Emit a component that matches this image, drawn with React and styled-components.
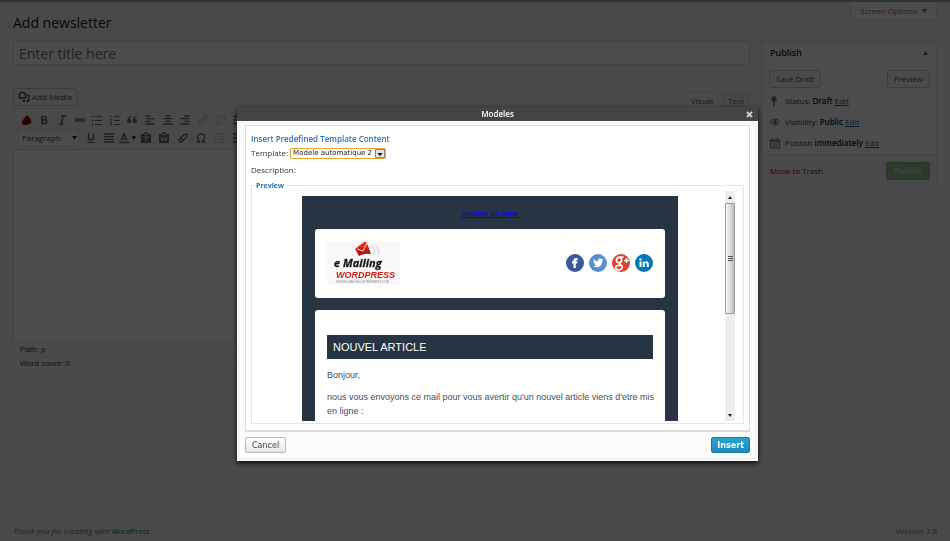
import React from "react";
import styled, { createGlobalStyle, css } from "styled-components";

const Global = createGlobalStyle`
  *, *::before, *::after { box-sizing: border-box; }
  body { margin: 0; background: #f4f4f4; font: 8px/12px "Open Sans", sans-serif; color: #444; }
  button, input, select, textarea { font: inherit; color: inherit; margin: 0; }
  h1, h2, h3, p { margin: 0; font-weight: normal; }
  b { font-weight: 600; color: #222; }
`;

/* ---------- admin page ---------- */

const Page = styled.div`
  display: flex;
  flex-direction: column;
  min-height: 100vh;
  padding: 0 13px;
  border-top: 2px solid #89b7c5;
`;
const Header = styled.header`
  display: flex;
  justify-content: space-between;
  align-items: flex-start;
  height: 39px;
`;
const PageTitle = styled.h1`
  padding-top: 10px;
  font-size: 14px;
  line-height: 22px;
  color: #222;
`;
const ScreenOptions = styled.button`
  display: flex;
  align-items: center;
  gap: 5px;
  height: 18px;
  padding: 0 9px;
  border: 1px solid #e0e0e0;
  border-top: 0;
  background: #fff;
  color: #777;
  font-size: 8px;
`;
const Columns = styled.div`
  display: grid;
  grid-template-columns: minmax(0, 1fr) 175px;
  gap: 12px;
  align-items: start;
`;
const TitleInput = styled.input`
  display: block;
  width: 100%;
  height: 24px;
  padding: 0 5px;
  border: 1px solid #ddd;
  background: #fff;
  font-size: 14px;
  &::placeholder { color: #777; opacity: 1; }
`;
const EditorTabs = styled.div`
  display: flex;
  align-items: flex-end;
  justify-content: space-between;
  height: 43px;
`;
const WpButton = styled.button`
  display: flex;
  align-items: center;
  gap: 3px;
  height: 18px;
  padding: 0 6px;
  border: 1px solid #ccc;
  border-radius: 2px;
  background: #f7f7f7;
  color: #555;
  white-space: nowrap;
  ${(p) => p.$primary && css`
    padding: 0 7px;
    border-color: #83b389;
    background: #8ec595;
    color: #d4e8d6;
    font-weight: 600;
  `}
`;
const MediaButton = styled(WpButton)`
  margin-bottom: 2px;
  padding: 0 4px;
  gap: 2px;
`;
const TabList = styled.div`
  display: flex;
  gap: 3px;
`;
const Tab = styled.button`
  height: 16px;
  padding: 0 5px;
  border: 1px solid #e2e2e2;
  border-bottom: 0;
  background: ${(p) => (p.$active ? "#f7f7f7" : "#ebebeb")};
  color: ${(p) => (p.$active ? "#555" : "#777")};
`;
const Editor = styled.section`
  border: 1px solid #e3e3e3;
  background: #fff;
`;
const Toolbar = styled.div`
  display: flex;
  flex-direction: column;
  gap: 1px;
  padding: 2px 4px;
  height: 41px;
  border-bottom: 1px solid #ddd;
  background: #f5f5f5;
`;
const ToolRow = styled.div`
  display: grid;
  grid-template-columns: ${(p) => (p.$format ? "64px 165px" : "229px")};
`;
const ToolGroup = styled.div`
  display: grid;
  grid-auto-flow: column;
  grid-auto-columns: 1fr;
  height: 17px;
`;
const ToolButton = styled.button`
  display: flex;
  align-items: center;
  justify-content: center;
  padding: 0;
  border: 0;
  background: none;
  color: #6c6c6c;
  opacity: ${(p) => (p.$faded ? 0.3 : 1)};
`;
const SelectBox = styled.div`
  display: grid;
  align-items: center;
  color: #222;
  & > * { grid-area: 1 / 1; }
  & > svg { justify-self: end; margin-right: 5px; pointer-events: none; }
`;
const FormatSelect = styled.select`
  width: 61px;
  height: 17px;
  padding: 0 3px;
  border: 1px solid #e5e5e5;
  background: #fff;
  color: #444;
  appearance: none;
`;
const Writing = styled.textarea`
  display: block;
  width: 100%;
  height: 192px;
  padding: 8px;
  border: 0;
  resize: none;
  background: #fff;
`;
const StatusLine = styled.div`
  height: 14px;
  padding: 0 6px;
  border-top: 1px solid #e3e3e3;
  background: #f9f9f9;
  font: 8px/13px "Liberation Sans", sans-serif;
`;
const Panel = styled.section`
  border: 1px solid #e5e5e5;
  background: #fff;
`;
const PanelHead = styled.div`
  display: flex;
  align-items: center;
  justify-content: space-between;
  height: 22px;
  padding: 0 8px 0 7px;
  border-bottom: 1px solid #eee;
  color: #777;
`;
const PanelTitle = styled.h2`
  font-size: 9px;
  font-weight: 600;
  color: #222;
`;
const PanelActions = styled.div`
  display: flex;
  justify-content: space-between;
  padding: 6px;
`;
const InfoList = styled.div`
  display: grid;
  gap: 9px;
  padding: 1px 6px 5px;
`;
const InfoRow = styled.div`
  display: flex;
  align-items: center;
  gap: 4px;
`;
const PanelFoot = styled.div`
  display: flex;
  align-items: center;
  justify-content: space-between;
  height: 33px;
  padding: 0 6px 0 7px;
  border-top: 1px solid #ddd;
  background: #f5f5f5;
`;
const Link = styled.a`
  color: ${(p) => (p.$danger ? "#a00" : "#0074a2")};
  text-decoration: ${(p) => (p.$plain ? "none" : "underline")};
`;
const Footer = styled.footer`
  display: flex;
  justify-content: space-between;
  margin-top: auto;
  padding-bottom: 4px;
  color: #777;
`;

/* ---------- dialog ---------- */

const Overlay = styled.div`
  position: fixed;
  inset: 0;
  display: flex;
  align-items: flex-start;
  justify-content: center;
  padding: 107px 0 0 45px;
  background: rgba(0, 0, 0, 0.7);
`;
const Dialog = styled.div`
  width: 521px;
  max-width: 100%;
  background: #444;
  box-shadow: 0 2px 5px rgba(0, 0, 0, 0.9);
`;
const DialogTitle = styled.div`
  display: grid;
  grid-template-columns: 16px 1fr 16px;
  align-items: center;
  height: 14px;
  color: #fff;
  text-align: center;
`;
const TitleText = styled.h2`
  font-size: 8px;
  font-weight: 600;
`;
const CloseButton = styled.button`
  display: flex;
  padding: 0 4px;
  border: 0;
  background: none;
  color: #ccc;
`;
const DialogBody = styled.div`
  padding: 2px 5px 5px;
  border: solid #f3f3f3;
  border-width: 2px 3px 3px;
  outline: 1px solid #fff;
  outline-offset: -1px;
  background: #fcfcfc;
`;
const Frame = styled.div`
  padding: 7px 5px 6px;
  border: 1px solid #ddd;
  border-bottom-width: 2px;
  background: #fff;
  color: #333;
`;
const Heading = styled.h3`
  font-size: 8px;
  line-height: 11px;
  font-weight: 600;
  color: #2b6fb6;
`;
const Field = styled.div`
  display: flex;
  align-items: center;
  gap: 2px;
  height: ${(p) => (p.$tall ? "17px" : "14px")};
  margin-top: ${(p) => (p.$tall ? "1px" : "2px")};
`;
const TemplateSelectBox = styled(SelectBox)`
  & > svg { margin-right: 1px; }
`;
const TemplateSelect = styled.select`
  width: 96px;
  height: 11px;
  padding: 0 2px;
  border: 1px solid #e8a628;
  border-radius: 1px;
  background: #fff;
  font: 7px/9px "DejaVu Sans", sans-serif;
  appearance: none;
`;
const PreviewSet = styled.fieldset`
  min-width: 0;
  margin: 4px 0 0;
  padding: 2px 8px 2px 50px;
  border: 1px solid #e6e6e6;
`;
const Legend = styled.legend`
  height: 7px;
  margin-left: -47px;
  padding: 0 1px;
  font-size: 7px;
  line-height: 7px;
  font-weight: 700;
  color: #2b6fb6;
`;
const Viewport = styled.div`
  display: flex;
  justify-content: space-between;
  height: 230px;
`;
const Mail = styled.div`
  display: flex;
  flex-direction: column;
  gap: 12px;
  width: 376px;
  margin-top: 5px;
  padding: 0 13px;
  overflow: hidden;
  background: #273444;
  font: 9px/14px "Liberation Sans", sans-serif;
  color: #44505c;
`;
const OnlineLink = styled.a`
  align-self: center;
  margin: 11px 0 -4px;
  line-height: 14px;
  font-size: 8px;
  color: #00f;
`;
const Card = styled.div`
  flex: none;
  padding: ${(p) => (p.$banner ? "12px 12px 13px" : "25px 12px")};
  border-radius: 3px;
  background: #fff;
`;
const Masthead = styled(Card)`
  display: flex;
  align-items: center;
  justify-content: space-between;
`;
const Socials = styled.div`
  display: flex;
  gap: 5px;
`;
const SocialLink = styled.a`
  display: flex;
`;
const ArticleTitle = styled.h2`
  padding: 0 6px;
  background: #273444;
  color: #fff;
  font-size: 11px;
  line-height: 24px;
`;
const Para = styled.p`
  margin: ${(p) => (p.$first ? "9px" : "8px")} -8px 0 0;
`;
const ScrollTrack = styled.div`
  display: grid;
  grid-template-rows: 12px 111px 1fr 12px;
  justify-items: center;
  align-items: center;
  width: 10px;
  background: #ededed;
`;
const ScrollThumb = styled.div`
  display: flex;
  align-items: center;
  justify-content: center;
  width: 10px;
  height: 111px;
  border: 1px solid #9a9aa0;
  border-radius: 1px;
  background: linear-gradient(90deg, #fafafa, #dcdce0 50%, #bcbcc4);
`;
const DialogActions = styled.div`
  display: flex;
  justify-content: space-between;
  padding-top: 5px;
`;
const ActionButton = styled.button`
  height: 16px;
  padding: ${(p) => (p.$primary ? "1px 5px 0" : "1px 6px 0")};
  border: 1px solid ${(p) => (p.$primary ? "#1379a8" : "#b9b9b9")};
  border-radius: 2px;
  background: ${(p) => (p.$primary ? "linear-gradient(#2ea2cc, #1e8cbe)" : "linear-gradient(#fff, #e6e6e6)")};
  color: ${(p) => (p.$primary ? "#fff" : "#444")};
  font: ${(p) => (p.$primary ? "bold" : "normal")} 8px/12px "DejaVu Sans", sans-serif;
`;

/* ---------- drawings ---------- */

const Svg = ({ w = 12, h = 12, children, ...rest }) => (
  <svg width={w} height={h} viewBox={`0 0 ${w} ${h}`} fill="none" stroke="currentColor" aria-hidden="true" {...rest}>
    {children}
  </svg>
);
const Triangle = ({ up }) => (
  <Svg w={5} h={4} stroke="none">
    <path fill="currentColor" d={up ? "M0 4h5L2.500 0z" : "M0 0h5L2.500 4z"} />
  </Svg>
);

const icons = {
  Newsletter: <Svg stroke="none"><path fill="#c00" d="M1 7 6 1l3 3 1 5-5 2-4-1z" /><path fill="#700" d="M1 7l4 1 4-4 1 5-5 2-4-1z" /><path stroke="#bbb" d="M11 5q1 3-1 5" /></Svg>,
  Bold: <Svg><path strokeWidth="1.700" d="M4 2.500v7M3 2.500h3.500q1.700 0 1.700 1.700t-1.700 1.700H4M6.500 6q2.200 0 2.200 1.800t-2.200 1.800H3" /></Svg>,
  Italic: <Svg><path strokeWidth="1.500" d="M5 2h5M2.500 10h5M7.500 2l-2.500 8" /></Svg>,
  Strikethrough: <Svg stroke="none"><text x="1" y="8" fontSize="5" fontWeight="700" fill="currentColor">ABC</text><path fill="currentColor" d="M0 5.500h12v1H0z" /></Svg>,
  "Bulleted list": <Svg><path d="M4 2.500h7M4 6.500h7M4 10.500h7" /><path strokeWidth="1.500" d="M1 2.500h1.500M1 6.500h1.500M1 10.500h1.500" /></Svg>,
  "Numbered list": <Svg><path d="M5 2.500h6M5 6.500h6M5 10.500h6" /><path strokeWidth=".8" d="M1 1.500h1V4M1 5.500h1.500L1 7.500h1.500M1 9h1.500v2H1M1.500 10h1" /></Svg>,
  Quote: <Svg stroke="none"><path fill="currentColor" d="M6 2Q3.500 2.800 3.500 5h.3a2.100 2.100 0 1 1-2.600 2Q1 2.500 6 1.500zM11.500 2Q9 2.800 9 5h.3a2.100 2.100 0 1 1-2.600 2Q6.500 2.500 11.500 1.500z" /></Svg>,
  "Align left": <Svg><path strokeWidth="1.300" d="M1.500 2h5M1.500 4.700h9M1.500 7.300h5M1.500 10h9" /></Svg>,
  "Align center": <Svg><path strokeWidth="1.300" d="M3.500 2h5M1.500 4.700h9M3.500 7.300h5M1.500 10h9" /></Svg>,
  "Align right": <Svg><path strokeWidth="1.300" d="M5.500 2h5M1.500 4.700h9M5.500 7.300h5M1.500 10h9" /></Svg>,
  Link: <Svg><path strokeWidth="1.300" d="M5 7l3-3M5.500 4l2-2q1.500-1 2.500 0t0 2.500l-2 2M6.500 8l-2 2q-1.500 1-2.500 0t0-2.500l2-2" /></Svg>,
  Unlink: <Svg><path strokeWidth="1.300" d="M6 4l1.500-2q1.500-1 2.500 0t0 2.500L8.500 6M6 8l-1.500 2q-1.500 1-2.500 0t0-2.500L3.500 6M2 2l2 2M8 8l2 2" /></Svg>,
  "Insert more": <Svg><path strokeWidth="1.500" d="M1 2.500h10M1 6h3M5.500 6h2M9 6h2M1 9.500h10" /></Svg>,
  Underline: <Svg><path strokeWidth="1.500" d="M3.500 1.500v4q0 2.500 2.500 2.500t2.500-2.500v-4" /><path d="M2 10.500h8" /></Svg>,
  Justify: <Svg><path strokeWidth="1.300" d="M1 2h10M1 4.700h10M1 7.300h10M1 10h10" /></Svg>,
  "Text color": <Svg w={17}><path strokeWidth="1.500" d="M2 8.500 4.700 2h.6l2.700 6.500M3 6.500h4.500" /><path strokeWidth="1.500" d="M0 10.500h10" /><path fill="#000" stroke="none" d="M12.500 4.500h4.500l-2.200 3z" /></Svg>,
  "Paste as text": <Svg><path fill="currentColor" stroke="none" d="M1 2h3V.5h4V2h3v9H1z" /><path stroke="#f5f5f5" d="M3 5h6M6 5v5M4 2.500h4" /></Svg>,
  "Paste from Word": <Svg><path fill="currentColor" stroke="none" d="M1 2h3V.5h4V2h3v9H1z" /><path stroke="#f5f5f5" d="M3 5l1.300 4L6 5.500 7.700 9 9 5M4 2.500h4" /></Svg>,
  "Clear formatting": <Svg><path strokeWidth="1.300" d="M2 8l5-5.500h3L9.500 5l-5 5h-2zM4 6.500 6 8" /></Svg>,
  "Special character": <Svg><path strokeWidth="1.300" d="M1.500 10H4.500V9Q2.500 7.500 2.500 5.500 2.500 2 6 2t3.500 3.500Q9.500 7.500 7.500 9v1h3" /></Svg>,
  Outdent: <Svg><path d="M1 2h10M6 4.700h5M6 7.300h5M1 10h10M5 6H1M3 4.500 1 6l2 1.500" /></Svg>,
  Indent: <Svg><path strokeWidth="1.300" d="M1 2h10M6 4.700h5M6 7.300h5M1 10h10M1 6h4" /></Svg>,
};

const Tools = ({ names, faded = [] }) => (
  <ToolGroup>
    {names.map((n) => (
      <ToolButton key={n} aria-label={n} title={n} $faded={faded.includes(n)}>{icons[n]}</ToolButton>
    ))}
  </ToolGroup>
);

const MediaIcon = () => (
  <Svg><path strokeWidth="1.500" d="M1.500 2.500h1l1-1h2l1 1h1V7h-6z" /><path strokeWidth="1.300" d="M9 4.500h2V10" /><circle cx="9.700" cy="10" r="1.300" fill="currentColor" stroke="none" /><circle cx="6" cy="9.700" r="1.300" fill="currentColor" stroke="none" /></Svg>
);
const PinIcon = () => (
  <Svg><circle cx="5" cy="4" r="2.700" fill="#777" stroke="none" /><path stroke="#777" strokeWidth="1.500" d="M5 5v6" /></Svg>
);
const EyeIcon = () => (
  <Svg><path stroke="#777" d="M1 6q5-6 10 0-5 6-10 0z" /><circle cx="6" cy="6" r="2" fill="#777" stroke="none" /></Svg>
);
const CalendarIcon = () => (
  <Svg><path stroke="#777" d="M1.500 3h9v8h-9zM1 4.500h10M3.500 1v3M8.500 1v3M4 6v4M6 6v4M8 6v4" /></Svg>
);

const Logo = () => (
  <svg width="73" height="44" viewBox="0 0 73 44" role="img" aria-label="e Mailing WordPress">
    <defs>
      <linearGradient id="red" x2="0" y2="1"><stop stopColor="#ee3a2c" /><stop offset="1" stopColor="#a30c0c" /></linearGradient>
    </defs>
    <path fill="#f8f8f8" d="M0 0h73v44H0z" />
    <path fill="url(#red)" d="M28 8 37 1q2-1 3 1l4 11q-7-1-12 2z" />
    <path fill="none" stroke="#fff" strokeWidth=".8" d="M30 8l6 2 4-8" />
    <path fill="none" stroke="#ccc" d="M45 4q4 5 2 10M48 3q5 6 3 11" />
    <text x="7" y="26" fontFamily="Open Sans, sans-serif" fontStyle="italic" fontWeight="700" fontSize="11" fill="#1c1410" stroke="#1c1410" strokeWidth=".3">e Mailing</text>
    <text x="9" y="37" fontFamily="Liberation Sans, sans-serif" fontStyle="italic" fontWeight="700" fontSize="9" fill="#c81e16">WORDPRESS</text>
    <text x="9" y="42" fontFamily="Liberation Sans, sans-serif" fontSize="3" fill="#888">WWW.E-MAILING-WORDPRESS.COM</text>
  </svg>
);

const socials = [
  ["Facebook", "#3b5998", <path key="f" fill="#fff" d="M7.500 14V9.500H6V7.200h1.500V6.500q0-2.500 2.500-2.500h1.500v2.200h-.9q-.8 0-.8.8v.2h1.700l-.3 2.300H9.800V14z" />],
  ["Twitter", "#5a8fce", <path key="t" fill="#fff" d="M4.500 5q2 2.200 4.500 2.300Q9 4.500 11.200 4.500q1 0 1.600.7l1.400-.5-.8 1.200 1.200-.3-1.200 1.200Q13 12.800 8 13.300q-2.300 0-4-1.100 2 .1 3.200-.9-1.500-.2-2-1.500h.9Q4.500 9.200 4.500 7.500l.9.300Q4 6.500 4.500 5z" />],
  ["Google Plus", "#d8452e", <g key="g" fill="none" stroke="#fff" strokeWidth="1.700"><ellipse cx="7" cy="6" rx="2.600" ry="2.700" /><path d="M7 3.200h4.500M8.500 8.500q-2 1.200 0 2.300 3 1.700 1 4-2.500 2-5.500.2-1.200-2.500 1.500-3.500l3.500-.3" /><path strokeWidth="1.300" d="M14.500 4v5M12 6.500h5" /></g>],
  ["LinkedIn", "#0579b8", <path key="l" fill="#fff" d="M4.500 7.500h2V13h-2zM4.400 4.400h2.200v2H4.400zM7.800 7.500h1.900v.8q.6-1 1.900-1 2.200 0 2.200 2.600V13h-2v-2.800q0-1.200-1-1.200t-1 1.200V13h-2z" />],
];

export default function App() {
  return (
    <>
      <Global />
      <Page>
        <Header>
          <PageTitle>Add newsletter</PageTitle>
          <ScreenOptions>Screen Options <Triangle /></ScreenOptions>
        </Header>
        <Columns>
          <main>
            <TitleInput aria-label="Title" placeholder="Enter title here" />
            <EditorTabs>
              <MediaButton><MediaIcon />Add Media</MediaButton>
              <TabList><Tab $active>Visual</Tab><Tab>Text</Tab></TabList>
            </EditorTabs>
            <Editor>
              <Toolbar>
                <ToolRow>
                  <Tools
                    names={["Newsletter", "Bold", "Italic", "Strikethrough", "Bulleted list", "Numbered list", "Quote", "Align left", "Align center", "Align right", "Link", "Unlink", "Insert more"]}
                    faded={["Link", "Unlink"]}
                  />
                </ToolRow>
                <ToolRow $format>
                  <SelectBox>
                    <FormatSelect aria-label="Format"><option>Paragraph</option></FormatSelect>
                    <Triangle />
                  </SelectBox>
                  <Tools
                    names={["Underline", "Justify", "Text color", "Paste as text", "Paste from Word", "Clear formatting", "Special character", "Outdent", "Indent"]}
                    faded={["Outdent"]}
                  />
                </ToolRow>
              </Toolbar>
              <Writing aria-label="Content" />
              <StatusLine>Path: p</StatusLine>
              <StatusLine>Word count: 0</StatusLine>
            </Editor>
          </main>
          <Panel>
            <PanelHead><PanelTitle>Publish</PanelTitle><Triangle up /></PanelHead>
            <PanelActions><WpButton>Save Draft</WpButton><WpButton>Preview</WpButton></PanelActions>
            <InfoList>
              <InfoRow><PinIcon /><span>Status: <b>Draft</b> <Link href="#status">Edit</Link></span></InfoRow>
              <InfoRow><EyeIcon /><span>Visibility: <b>Public</b> <Link href="#visibility">Edit</Link></span></InfoRow>
              <InfoRow><CalendarIcon /><span>Publish <b>immediately</b> <Link href="#schedule">Edit</Link></span></InfoRow>
            </InfoList>
            <PanelFoot>
              <Link href="#trash" $danger $plain>Move to Trash</Link>
              <WpButton $primary>Publish</WpButton>
            </PanelFoot>
          </Panel>
        </Columns>
        <Footer>
          <i>Thank you for creating with <Link href="#wordpress" $plain>WordPress.</Link></i>
          <span>Version 3.8</span>
        </Footer>
      </Page>

      <Overlay>
        <Dialog role="dialog" aria-labelledby="dialog-title">
          <DialogTitle>
            <span />
            <TitleText id="dialog-title">Modeles</TitleText>
            <CloseButton aria-label="Close"><Svg w={7} h={7}><path strokeWidth="2" d="M1 1l5 5M6 1 1 6" /></Svg></CloseButton>
          </DialogTitle>
          <DialogBody>
            <Frame>
              <Heading>Insert Predefined Template Content</Heading>
              <Field>
                <label htmlFor="template">Template:</label>
                <TemplateSelectBox>
                  <TemplateSelect id="template"><option>Modele automatique 2</option></TemplateSelect>
                  <Svg w={10} h={9}><path fill="#e4e4e4" stroke="#888" d="M.5.5h9v8h-9z" /><path fill="#000" stroke="none" d="M2.500 4h5L5 7z" /></Svg>
                </TemplateSelectBox>
              </Field>
              <Field $tall>Description:</Field>
              <PreviewSet>
                <Legend>Preview</Legend>
                <Viewport>
                  <Mail>
                    <OnlineLink href="#online">Version en ligne</OnlineLink>
                    <Masthead $banner>
                      <Logo />
                      <Socials>
                        {socials.map(([name, color, mark]) => (
                          <SocialLink key={name} href={`#${name}`} aria-label={name}>
                            <Svg w={18} h={18} stroke="none"><circle cx="9" cy="9" r="9" fill={color} />{mark}</Svg>
                          </SocialLink>
                        ))}
                      </Socials>
                    </Masthead>
                    <Card>
                      <ArticleTitle>NOUVEL ARTICLE</ArticleTitle>
                      <Para $first>Bonjour,</Para>
                      <Para>nous vous envoyons ce mail pour vous avertir qu'un nouvel article viens d'etre mis en ligne :</Para>
                    </Card>
                  </Mail>
                  <ScrollTrack>
                    <Svg w={4} h={3} stroke="none"><path fill="#222" d="M0 3h4L2 0z" /></Svg>
                    <ScrollThumb><Svg w={5} h={6}><path stroke="#555" d="M0 .5h5M0 2.500h5M0 4.500h5" /></Svg></ScrollThumb>
                    <span />
                    <Svg w={4} h={3} stroke="none"><path fill="#222" d="M0 0h4L2 3z" /></Svg>
                  </ScrollTrack>
                </Viewport>
              </PreviewSet>
            </Frame>
            <DialogActions>
              <ActionButton>Cancel</ActionButton>
              <ActionButton $primary>Insert</ActionButton>
            </DialogActions>
          </DialogBody>
        </Dialog>
      </Overlay>
    </>
  );
}
